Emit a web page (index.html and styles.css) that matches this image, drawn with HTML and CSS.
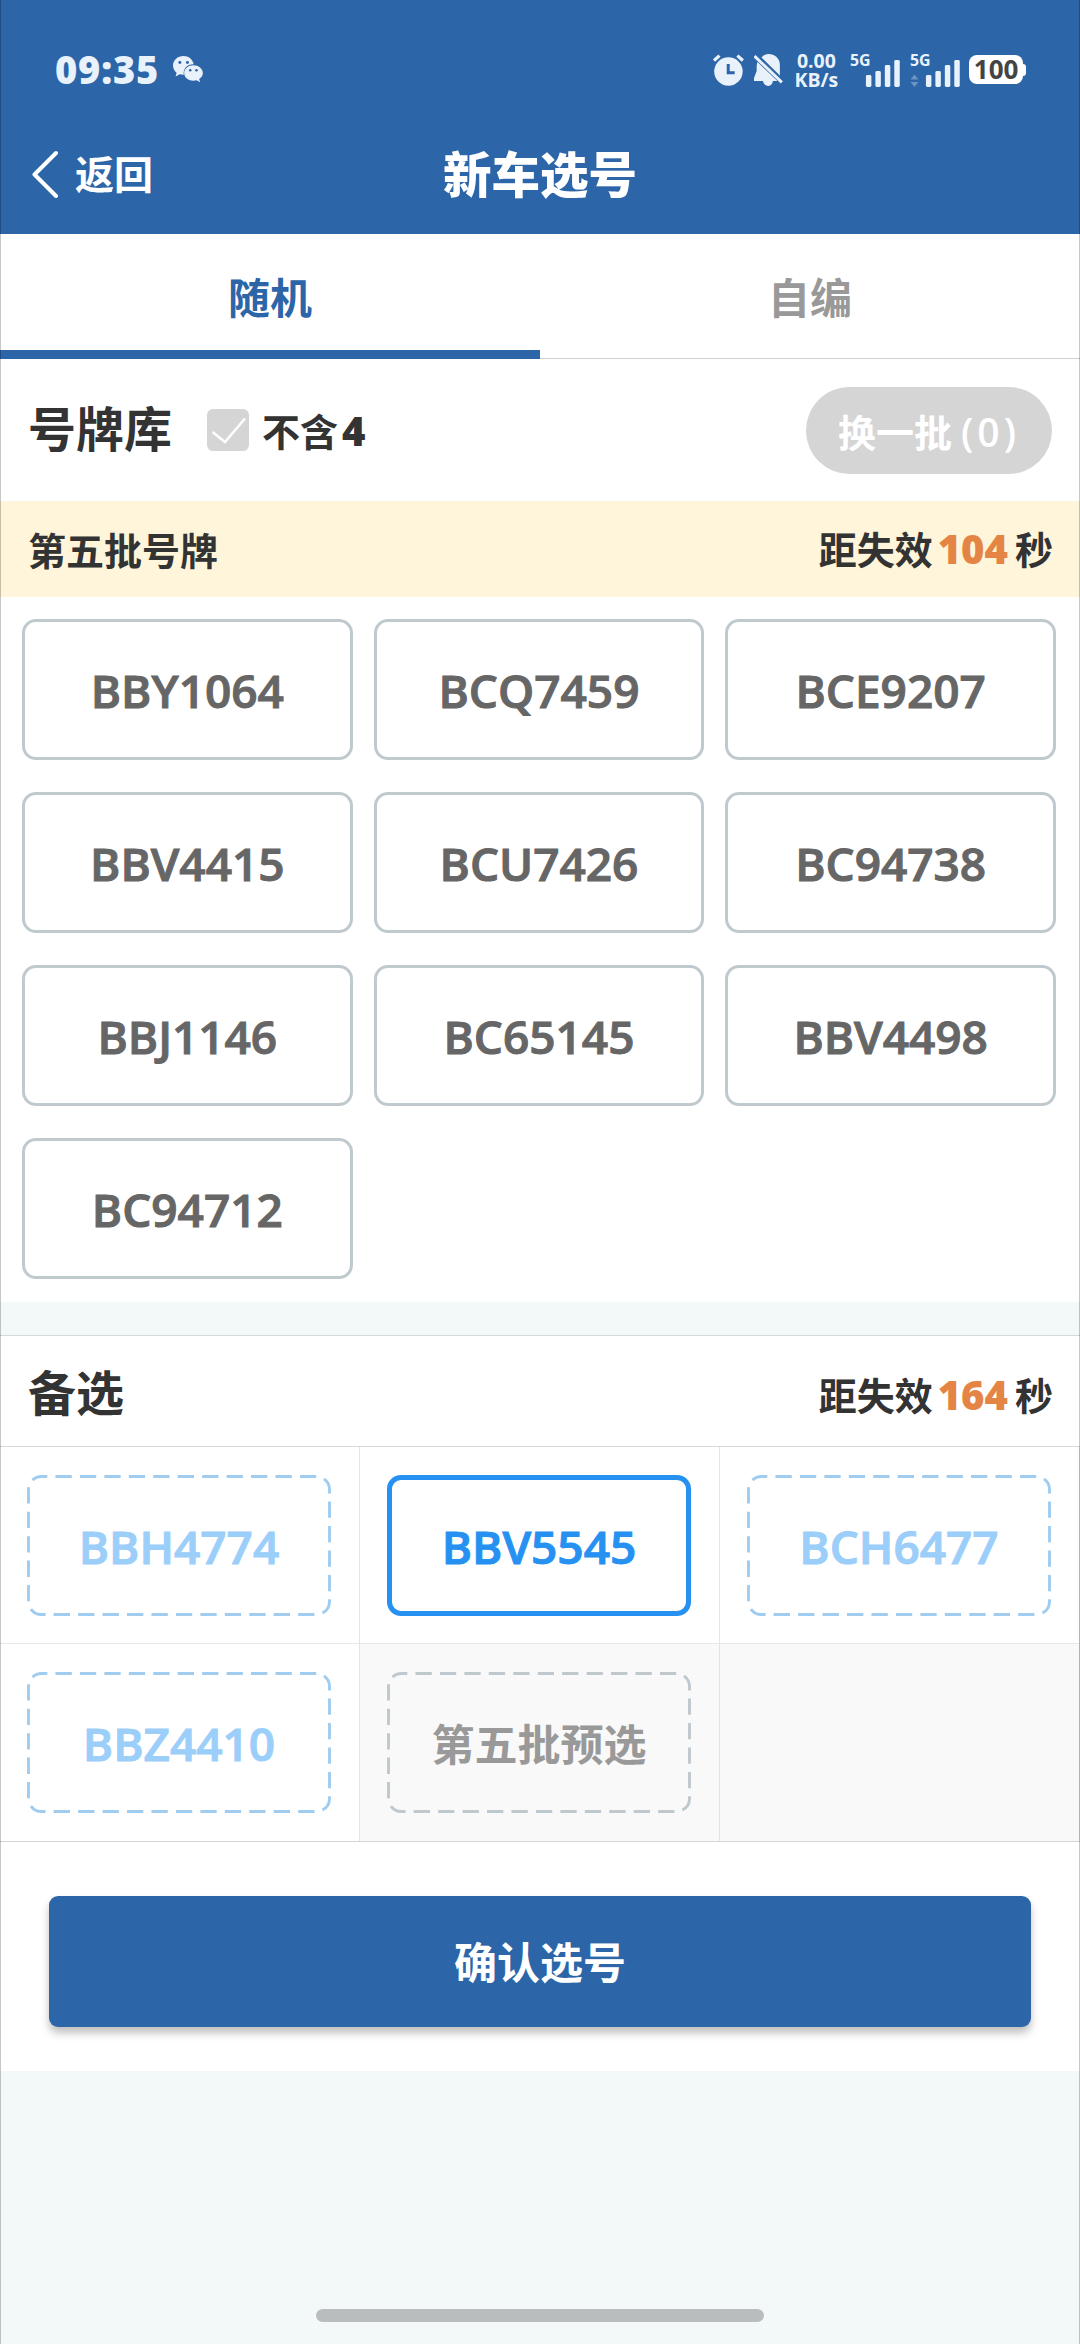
FILE: index.html
```html
<!DOCTYPE html>
<html lang="zh-CN">
<head>
    <meta charset="UTF-8">
    <meta name="viewport" content="width=device-width, initial-scale=1.0">
    <title>新车选号</title>
    <link rel="stylesheet" href="styles.css">
</head>
<body>
    <header class="header">
        <div class="statusbar">
            <span class="time">09:35</span>
            <svg class="wechat" width="31" height="27" viewBox="0 0 31 27">
                <path fill="#e9f1fb" d="M10.500 0C4.700 0 0 4.200 0 9.600c0 2.900 1.400 5.400 3.600 7.100L2.600 20.500l4.200-2.200c1.200.3 2.400.5 3.700.5h.4c-1.200-6 3.500-10.800 9.800-10.600C20 3.500 15.600 0 10.500 0z"/>
                <path fill="#e9f1fb" d="M20.500 9.300c-5 0-9.300 3.400-9.300 7.800s4.300 7.800 9.300 7.800c1.100 0 2.200-.2 3.200-.5l3.500 2-.9-3.300c2.200-1.400 3.700-3.500 3.700-6 0-4.400-4.400-7.800-9.500-7.800z"/>
                <circle cx="6.900" cy="6.500" r="1.500" fill="#2c65a8"/><circle cx="14.500" cy="6.500" r="1.500" fill="#2c65a8"/>
                <circle cx="17.300" cy="14.300" r="1.300" fill="#2c65a8"/><circle cx="23.600" cy="14.300" r="1.300" fill="#2c65a8"/>
            </svg>
            <svg class="alarm" width="32" height="32" viewBox="0 0 32 32">
                <circle cx="15.500" cy="17.500" r="14.300" fill="#e9f1fb"/>
                <path d="M1 6.500L6.500 1.500M30 6.500L24.500 1.500" stroke="#e9f1fb" stroke-width="3.200"/>
                <path d="M15.300 10v8.800h6.500" fill="none" stroke="#2c65a8" stroke-width="3"/>
            </svg>
            <svg class="bell" width="30" height="32" viewBox="0 0 30 32">
                <path d="M7.500 3.500C9.500 1 12 0 14.500 0c6.500 0 11.500 4.500 11.500 11v10.500z" fill="#e9f1fb"/>
                <path d="M3.500 8C2.500 11 2.700 13 2.700 17L0 24v3h9c.5 3 2.500 5 5.300 5s4.200-2 4.700-5h4.500z" fill="#e9f1fb"/>
                <path d="M.5 2L28 28.500" stroke="#e9f1fb" stroke-width="3"/>
            </svg>
            <span class="speed"><span>0.00</span><span>KB/s</span></span>
            <svg class="signal" width="52" height="40" viewBox="0 -2 52 40">
                <text x="0" y="14" class="net">5G</text>
                <g fill="#e9f1fb">
                    <rect x="16" y="23" width="5.500" height="12" rx="1.500"/>
                    <rect x="25.500" y="19" width="5.500" height="16" rx="1.500"/>
                    <rect x="35" y="13" width="5.500" height="22" rx="1.500"/>
                    <rect x="44.500" y="8" width="5.500" height="27" rx="1.500"/>
                </g>
            </svg>
            <svg class="signal signal2" width="52" height="40" viewBox="0 -2 52 40">
                <text x="0" y="14" class="net">5G</text>
                <path d="M.5 27.500l4-5 4 5zM.5 30l4 5 4-5z" fill="#6d93c4"/>
                <g fill="#e9f1fb">
                    <rect x="16" y="23" width="5.500" height="12" rx="1.500"/>
                    <rect x="25.500" y="19" width="5.500" height="16" rx="1.500"/>
                    <rect x="35" y="13" width="5.500" height="22" rx="1.500"/>
                    <rect x="44.500" y="8" width="5.500" height="27" rx="1.500"/>
                </g>
            </svg>
            <span class="battery">100</span><i class="tip"></i>
        </div>
        <div class="navbar">
            <a class="back">
                <svg width="28" height="48" viewBox="0 0 28 48"><path d="M24 3L2.500 24.500 24 46" fill="none" stroke="#fff" stroke-width="4" stroke-linecap="round" stroke-linejoin="round"/></svg>
                <span>返回</span>
            </a>
            <h1 class="title">新车选号</h1>
        </div>
    </header>

    <nav class="tabs">
        <div class="tab active">随机</div>
        <div class="tab">自编</div>
    </nav>

    <!-- 号牌库 -->
    <section class="pool">
        <div class="pool-head">
            <h2>号牌库</h2>
            <svg class="check" width="42" height="42" viewBox="0 0 42 42"><rect width="42" height="42" rx="6" fill="#d5d5d5"/><path d="M5.500 23L18 33 38 9.500" fill="none" stroke="#fff" stroke-width="2.500"/></svg>
            <span class="no4">不含<b>4</b></span>
            <button class="change">换一批<b>(0)</b></button>
        </div>
        <div class="batch">
            <span>第五批号牌</span>
            <span class="left-time">距失效<em>104</em>秒</span>
        </div>
        <div class="plates">
            <div class="plate">BBY1064</div>
            <div class="plate">BCQ7459</div>
            <div class="plate">BCE9207</div>
            <div class="plate">BBV4415</div>
            <div class="plate">BCU7426</div>
            <div class="plate">BC94738</div>
            <div class="plate">BBJ1146</div>
            <div class="plate">BC65145</div>
            <div class="plate">BBV4498</div>
            <div class="plate">BC94712</div>
        </div>
    </section>

    <!-- 备选 -->
    <section class="backup">
        <div class="backup-head">
            <h2>备选</h2>
            <span class="left-time">距失效<em>164</em>秒</span>
        </div>
        <div class="grid">
            <div class="cell">
                <div class="option"><svg class="dash"><use href="#dashbox"/></svg>BBH4774</div>
            </div>
            <div class="cell">
                <div class="option selected">BBV5545</div>
            </div>
            <div class="cell">
                <div class="option"><svg class="dash"><use href="#dashbox"/></svg>BCH6477</div>
            </div>
            <div class="cell">
                <div class="option"><svg class="dash"><use href="#dashbox"/></svg>BBZ4410</div>
            </div>
            <div class="cell empty">
                <div class="option preset"><svg class="dash"><use href="#dashbox"/></svg>第五批预选</div>
            </div>
            <div class="cell empty"></div>
        </div>
    </section>

    <div class="footer">
        <button class="confirm">确认选号</button>
    </div>
    <div class="home"></div>

    <svg width="0" height="0" class="defs">
        <defs>
            <rect id="dashbox" x="1.500" y="1.500" width="301" height="138" rx="13" fill="none" stroke-width="2.900" stroke-dasharray="16.300 8.150" stroke-dashoffset="10.500"/>
        </defs>
    </svg>
</body>
</html>
```
FILE: styles.css
```css
*{
    box-sizing: border-box;
}
body{
    margin: 0;
    height: 2344px;
    position: relative;
    display: flex;
    flex-direction: column;
    background-color: #f3f9f9;
    font-family: "Noto Sans CJK SC", sans-serif;
    font-weight: bold;
    color: #333;
}
/* thin edge on both sides of the screen */
body::after{
    content: "";
    position: absolute;
    inset: 0;
    border-left: 1px solid rgba(0,0,0,0.22);
    border-right: 1px solid rgba(0,0,0,0.22);
}
h1, h2{
    margin: 0;
}
h2{
    font-size: 48px;
    line-height: 60px;
}
b, em{
    font-family: "Open Sans", sans-serif;
    font-style: normal;
}
button{
    border: none;
    padding: 0;
    color: #fff;
    font-family: inherit;
    font-weight: bold;
}
.defs{
    position: absolute;
}
/* header */
.header{
    height: 234px;
    background-color: #2c65a8;
    color: #fff;
}
.statusbar{
    height: 117px;
    padding: 22px 54px 0 55px;
    display: flex;
    align-items: center;
    color: #e9f1fb;
    font-family: "Open Sans", sans-serif;
}
.time{
    width: 119px;
    padding-bottom: 2px;
    font-size: 38px;
    font-weight: 800;
    letter-spacing: 0.8px;
}
.alarm{
    margin-left: 509px;
}
.bell{
    margin-left: 9px;
}
.speed{
    width: 47px;
    margin-left: 9px;
    display: flex;
    flex-direction: column;
    font-size: 19.500px;
    line-height: 19px;
    text-align: center;
}
.signal{
    margin-left: 10px;
}
.signal2{
    margin-left: 8px;
}
.net{
    font-size: 16px;
    font-weight: 700;
    fill: #e9f1fb;
}
.battery{
    width: 54px;
    height: 29px;
    margin-left: 8px;
    border-radius: 8px;
    background-color: #fff;
    color: #444;
    font-size: 26px;
    line-height: 28px;
    text-align: center;
}
.tip{
    width: 3px;
    height: 12px;
    border-radius: 0 3px 3px 0;
    background-color: #fff;
}
.navbar{
    height: 113px;
    display: grid;
    grid-template-columns: 1fr auto 1fr;
    align-items: center;
}
.back{
    display: flex;
    align-items: center;
    gap: 15px;
    padding-left: 32px;
    font-size: 39px;
}
.back span{
    padding-bottom: 3px;
}
.title{
    padding-bottom: 3px;
    font-size: 48.500px;
    font-weight: 900;
}
/* tabs */
.tabs{
    height: 125px;
    display: flex;
    background-color: #fff;
}
.tab{
    flex: 1;
    line-height: 124px;
    text-align: center;
    font-size: 42px;
    color: #999;
    border-bottom: 1px solid #d0d0d0;
}
.tab.active{
    line-height: 124px;
    color: #2c65a8;
    border-bottom: 9px solid #2c65a8;
}
/* plates */
.pool{
    height: 943px;
    background-color: #fff;
}
.pool-head{
    height: 142px;
    padding: 0 28px 0 28px;
    display: flex;
    align-items: center;
}
.pool-head h2{
    padding-bottom: 8px;
}
.check{
    margin-left: 35px;
}
.no4{
    margin-left: 13px;
    font-size: 38px;
}
.no4 b{
    margin-left: 4px;
    font-size: 40px;
}
.change{
    width: 246px;
    height: 87px;
    margin-left: auto;
    border-radius: 44px;
    background-color: #d5d5d5;
    font-size: 38px;
}
.change b{
    margin-left: 9px;
    font-size: 39px;
    font-weight: 600;
    letter-spacing: 4px;
}
.batch{
    height: 96px;
    padding: 0 27px 2px 28px;
    display: flex;
    align-items: center;
    justify-content: space-between;
    background-color: #fef5da;
    font-size: 38px;
}
.left-time{
    font-size: 38px;
}
.left-time em{
    margin: 0 7px 0 5px;
    font-size: 40px;
    font-weight: 800;
    color: #e58545;
}
.plates{
    padding: 22px 24px 0 22px;
    display: grid;
    grid-template-columns: repeat(3, 1fr);
    grid-auto-rows: 141px;
    gap: 32px 21px;
}
.plate{
    display: flex;
    align-items: center;
    justify-content: center;
    border: 3px solid #c0c9ce;
    border-radius: 14px;
    font-family: "Open Sans", sans-serif;
    font-size: 46px;
    font-weight: 600;
    color: #666;
    -webkit-text-stroke: 1px #666;
}
/* backup */
.backup{
    margin-top: 33px;
    background-color: #fff;
    border-top: 1px solid #d3dadb;
}
.backup-head{
    height: 110px;
    padding: 0 27px 0 28px;
    display: flex;
    align-items: center;
    justify-content: space-between;
}
.backup-head h2{
    padding-bottom: 2px;
}
.backup-head .left-time{
    padding-top: 6px;
}
.grid{
    display: grid;
    grid-template-columns: 360px 360px 360px;
    grid-template-rows: 197px 197px;
    border-top: 1px solid #d8d8d8;
    border-bottom: 1px solid #d3d6d7;
}
.cell{
    padding: 28px 0 0 27px;
    border-right: 1px solid #e4e4e4;
    border-bottom: 1px solid #e8e8e8;
}
.cell:nth-child(n+4){
    border-bottom: none;
}
.empty{
    background-color: #f9f9f9;
}
.option{
    position: relative;
    width: 304px;
    height: 141px;
    display: flex;
    align-items: center;
    justify-content: center;
    font-family: "Open Sans", "Noto Sans CJK SC", sans-serif;
    font-size: 46px;
    font-weight: 600;
    color: #9ccefa;
    -webkit-text-stroke: 1px currentColor;
}
.dash{
    position: absolute;
    left: 0;
    top: 0;
    width: 304px;
    height: 141px;
    stroke: #a0ccf0;
}
.selected{
    border: 5px solid #2691f1;
    border-radius: 14px;
    color: #2691f1;
}
.preset{
    font-size: 43px;
    font-weight: bold;
    color: #999;
    -webkit-text-stroke: 0;
}
.preset .dash{
    stroke: #bfc8cd;
}
/* confirm */
.footer{
    height: 229px;
    padding: 54px 49px 0;
    background-color: #fff;
}
.confirm{
    display: block;
    width: 100%;
    height: 131px;
    padding-bottom: 3px;
    border-radius: 9px;
    background-color: #2c65a8;
    box-shadow: 0 6px 9px rgba(0,0,0,0.25);
    font-size: 43px;
}
.home{
    width: 448px;
    height: 13px;
    margin: auto auto 22px;
    border-radius: 7px;
    background-color: #babdbd;
}
```
